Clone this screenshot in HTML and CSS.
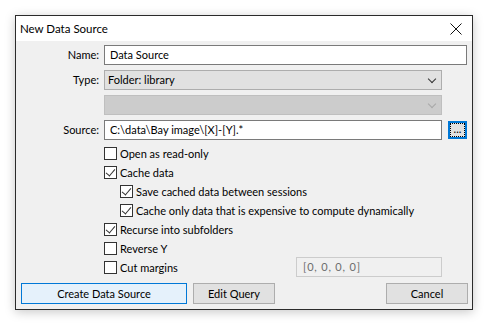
FILE: index.html
```html
<!DOCTYPE html>
<html lang="en">
<head>
  <meta charset="UTF-8">
  <title>New Data Source</title>
  <link rel="stylesheet" href="styles.css">
</head>
<body>
  <div class="dialog">
    <div class="titlebar">
      <span class="title">New Data Source</span>
      <svg class="close" width="12" height="12" viewBox="0 0 12 12">
        <path d="M0.5 0.5 L11.5 11.5 M11.5 0.5 L0.5 11.5" stroke="#111" stroke-width="1" fill="none"/>
      </svg>
    </div>
    <div class="content">
      <div class="form">
        <label class="lbl">Name:</label>
        <div class="field wide"><div class="input">Data Source</div></div>

        <label class="lbl">Type:</label>
        <div class="field"><div class="select">Folder: library<span class="caret"></span></div></div>

        <span class="lbl"></span>
        <div class="field"><div class="select disabled"><span class="caret"></span></div></div>

        <label class="lbl">Source:</label>
        <div class="field"><div class="input">C:\data\Bay image\[X]-[Y].*</div></div>
        <div class="browse">...</div>
      </div>

      <div class="checks">
        <div class="row"><span class="box"></span>Open as read-only</div>
        <div class="row"><span class="box on"></span>Cache data</div>
        <div class="row sub"><span class="box on"></span>Save cached data between sessions</div>
        <div class="row sub"><span class="box on"></span>Cache only data that is expensive to compute dynamically</div>
        <div class="row"><span class="box on"></span>Recurse into subfolders</div>
        <div class="row"><span class="box"></span>Reverse Y</div>
        <div class="row margins">
          <span class="check-label"><span class="box"></span>Cut margins</span>
          <div class="margin-input">[0, 0, 0, 0]</div>
        </div>
      </div>

      <div class="buttons">
        <button class="btn primary">Create Data Source</button>
        <button class="btn query">Edit Query</button>
        <span class="spacer"></span>
        <button class="btn cancel">Cancel</button>
      </div>
    </div>
  </div>
</body>
</html>
```

FILE: styles.css
```css
body {
  margin: 0;
  padding: 15px;
  background: #fff;
  font-family: Lato, "Noto Sans", sans-serif;
  font-size: 11px;
  color: #000;
}

.dialog {
  width: 456px;
  height: 293px;
  border: 1px solid #2b2b2b;
  background: #f0f0f0;
  box-shadow: 0 2px 10px rgba(0, 0, 0, 0.22);
  display: flex;
  flex-direction: column;
}

.titlebar {
  height: 25px;
  background: #fff;
  display: flex;
  align-items: center;
  padding: 0 10px 0 4px;
}

.title {
  flex: 1;
  font-size: 11.5px;
  color: #000;
}

.close {
  display: block;
}

.content {
  flex: 1;
  padding: 4px 4px 5px 5px;
  display: flex;
  flex-direction: column;
}

.form {
  display: grid;
  grid-template-columns: 78px 338px 20px;
  column-gap: 5px;
  row-gap: 5px;
  grid-auto-rows: 20px;
}

.lbl {
  grid-column: 1;
  text-align: right;
  line-height: 20px;
}

.field {
  grid-column: 2;
}

.field.wide {
  grid-column: 2 / 4;
}

.input {
  height: 20px;
  box-sizing: border-box;
  border: 1px solid #7a7a7a;
  background: #fff;
  line-height: 18px;
  padding: 0 5px;
  white-space: nowrap;
}

.select {
  height: 20px;
  box-sizing: border-box;
  border: 1px solid #adadad;
  background: #e1e1e1;
  line-height: 18px;
  padding: 0 3px;
  position: relative;
}

.select.disabled {
  background: #cccccc;
  border-color: #bfbfbf;
}

.caret {
  position: absolute;
  right: 6px;
  top: 5px;
  width: 5px;
  height: 5px;
  border-right: 1px solid #333;
  border-bottom: 1px solid #333;
  transform: rotate(45deg);
}

.disabled .caret {
  border-color: #a8a8a8;
}

.browse {
  grid-column: 3;
  margin: 1px 0 1px 1px;
  width: 19px;
  height: 18px;
  box-sizing: border-box;
  border: 2px solid #0078d7;
  background: #e1e1e1;
  outline: 1px dotted #000;
  outline-offset: -3px;
  text-align: center;
  line-height: 12px;
  font-size: 11px;
  color: #000;
}

.checks {
  margin-top: 4px;
  margin-left: 83px;
  display: flex;
  flex-direction: column;
}

.row {
  height: 19px;
  display: flex;
  align-items: center;
}

.row.sub {
  padding-left: 16px;
}

.box {
  width: 13px;
  height: 13px;
  box-sizing: border-box;
  border: 1px solid #333;
  background: #fff;
  margin-right: 3px;
  position: relative;
  flex: none;
}

.box.on::after {
  content: "";
  position: absolute;
  left: 3px;
  top: 0px;
  width: 4px;
  height: 8px;
  border-right: 1px solid #333;
  border-bottom: 1px solid #333;
  transform: rotate(40deg);
}

.check-label {
  display: flex;
  align-items: center;
  width: 192px;
}

.margins {
  height: 20px;
  margin-top: -1px;
}

.margin-input {
  width: 146px;
  height: 20px;
  box-sizing: border-box;
  border: 1px solid #cccccc;
  background: #f0f0f0;
  color: #6d6d6d;
  line-height: 18px;
  padding: 0 6px;
  letter-spacing: 0.8px;
}

.buttons {
  margin-top: 6px;
  display: flex;
  gap: 6px;
}

.btn {
  height: 21px;
  box-sizing: border-box;
  border: 1px solid #adadad;
  background: #e1e1e1;
  font-family: inherit;
  font-size: 11px;
  color: #000;
  padding: 0;
  margin: 0;
}

.btn.primary {
  width: 166px;
  border-color: #0078d7;
  background: #e5f1fb;
}

.btn.query {
  width: 82px;
}

.spacer {
  flex: 1;
}

.btn.cancel {
  width: 82px;
}
```
